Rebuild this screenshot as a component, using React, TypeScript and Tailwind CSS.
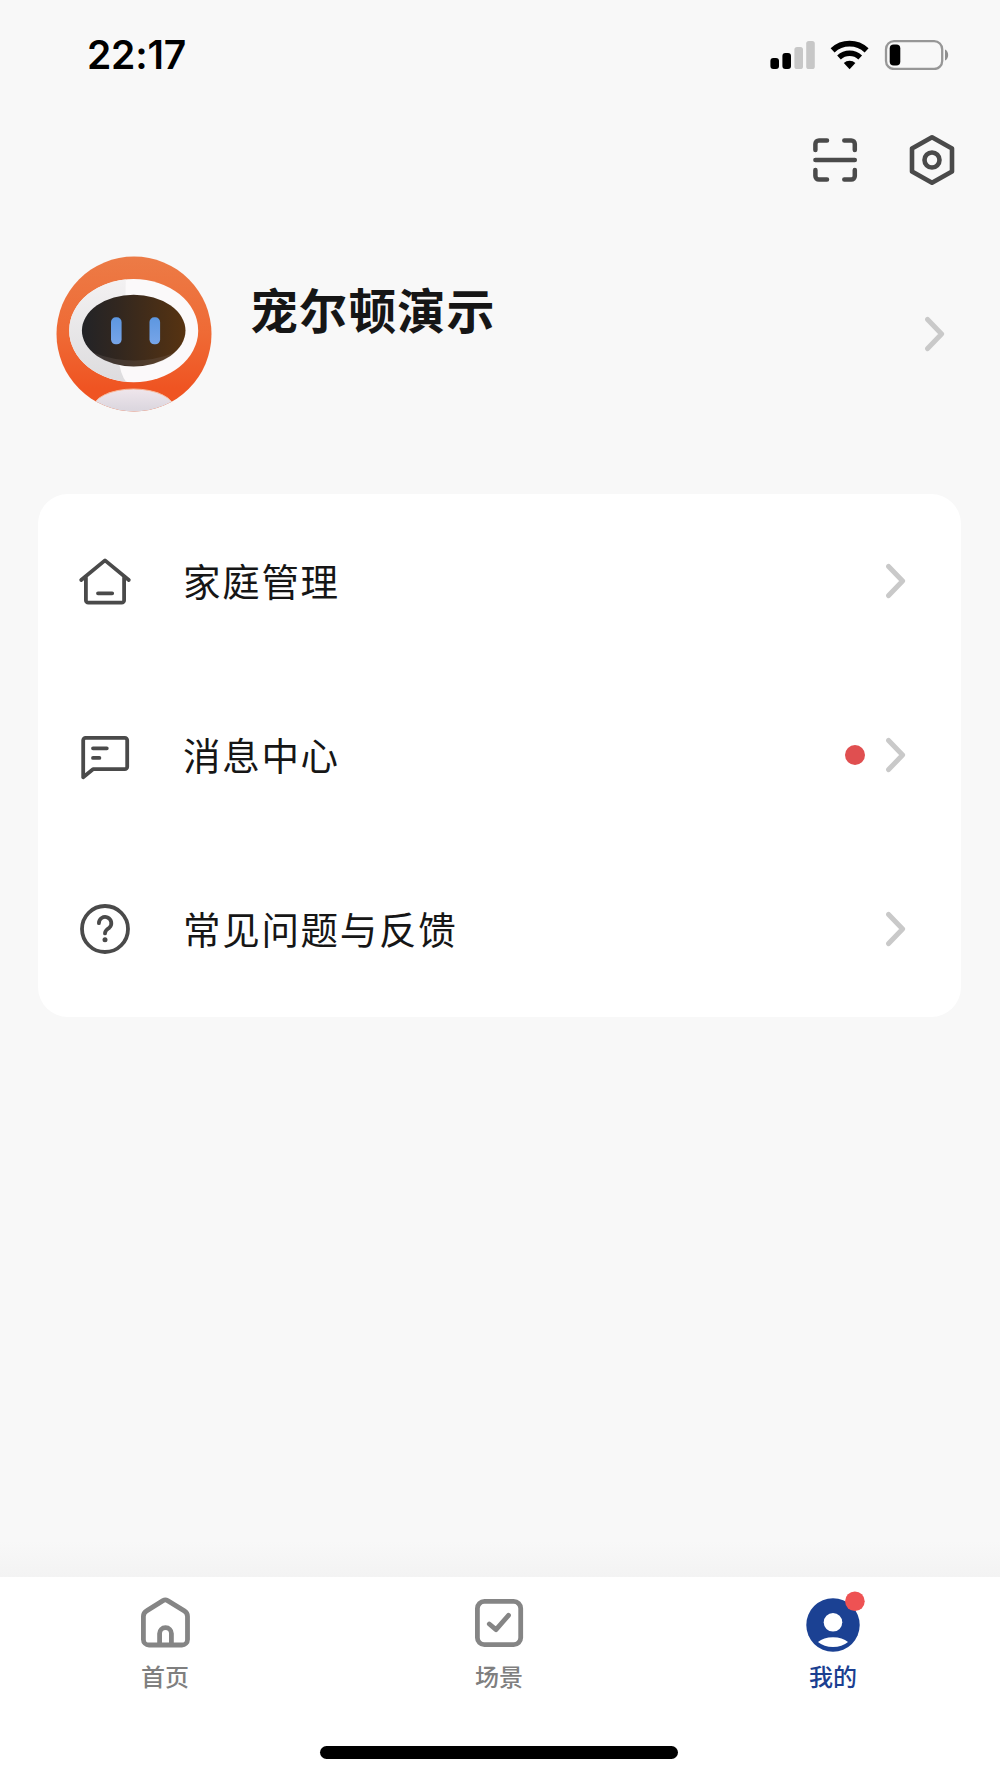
import React from "react";

function Chevron() {
  return (
    <svg width="20" height="36" viewBox="0 0 20 36" fill="none" className="shrink-0">
      <path d="M2.6 3.4 16.6 18 2.6 32.6" stroke="#c9c9c9" strokeWidth="5" strokeLinecap="round" strokeLinejoin="round" />
    </svg>
  );
}

function StatusBar() {
  return (
    <header className="flex h-[110px] items-center justify-between pl-[87px] pr-[50px]">
      <time className="mb-[2px] font-['Inter'] text-[39px] leading-none font-semibold tracking-[-0.2px] text-black">22:17</time>
      <div className="flex items-center">
        <svg width="46" height="30" viewBox="0 0 46 30">
          <rect x="0.4" y="18" width="8.6" height="11" rx="3" fill="#000" />
          <rect x="12.4" y="13" width="8.6" height="16" rx="3" fill="#000" />
          <rect x="24.4" y="7" width="8.6" height="22" rx="2.6" fill="#c7c7c7" />
          <rect x="36.2" y="1" width="8.6" height="28" rx="2.6" fill="#c7c7c7" />
        </svg>
        <svg width="40" height="30" viewBox="0 0 40 30" className="ml-[14px]" fill="none" stroke="#000">
          <path d="M2.6 10.3a25 25 0 0 1 34 0" strokeWidth="5.8" />
          <path d="M9 17.4a15.6 15.6 0 0 1 21.2 0" strokeWidth="5.4" />
          <path d="M19.6 29.2 13.8 23a8.3 8.3 0 0 1 11.6 0z" fill="#000" stroke="none" />
        </svg>
        <svg width="66" height="30" viewBox="0 0 66 30" className="ml-[14px]">
          <rect x="2" y="1.2" width="56.2" height="27.8" rx="8" fill="none" stroke="#979797" strokeWidth="2.3" />
          <rect x="5.7" y="4.6" width="10.6" height="21" rx="4" fill="#000" />
          <path d="M61 9.6c4.2 1.6 4.2 9.4 0 11z" fill="#8e8e8e" />
        </svg>
      </div>
    </header>
  );
}

function ScanIcon() {
  return (
    <svg width="46" height="46" viewBox="0 0 46 46" fill="none" stroke="#4a4a4a" strokeWidth="4.5" strokeLinecap="round">
      <path d="M3.4 13V7A3.6 3.6 0 0 1 7 3.4h8M32.3 3.4h6.9A3.6 3.6 0 0 1 42.8 7v6M3.4 33v6A3.6 3.6 0 0 0 7 42.6h8M32.3 42.6h6.9a3.6 3.6 0 0 0 3.6-3.6v-6M3.4 23h39.4" />
    </svg>
  );
}

function SettingsIcon() {
  return (
    <svg width="46" height="52" viewBox="0 0 46 52" fill="none" stroke="#4a4a4a" strokeWidth="4.6">
      <path d="M23 3.2 43 14.6v22.8L23 48.8 3 37.4V14.6z" strokeLinejoin="round" />
      <circle cx="23" cy="26" r="7.5" />
    </svg>
  );
}

function Avatar() {
  return (
    <svg width="156" height="156" viewBox="0 0 156 156">
      <defs>
        <clipPath id="disc"><circle cx="78" cy="78" r="77.5" /></clipPath>
        <clipPath id="faceLeft"><path d="M0 0H69Q72 40 65 78T74 130H0z" /></clipPath>
        <linearGradient id="orange" x1="0" y1="0" x2="0" y2="1">
          <stop offset="0" stopColor="#ec7b46" />
          <stop offset="0.5" stopColor="#ef6a35" />
          <stop offset="0.85" stopColor="#ef5422" />
        </linearGradient>
        <linearGradient id="visor" x1="0" y1="0" x2="1" y2="0">
          <stop offset="0" stopColor="#222327" />
          <stop offset="0.35" stopColor="#32271f" />
          <stop offset="1" stopColor="#573311" />
        </linearGradient>
        <linearGradient id="shade" x1="0" y1="0" x2="0" y2="1">
          <stop offset="0" stopColor="#f3f1f2" />
          <stop offset="1" stopColor="#dddcde" />
        </linearGradient>
        <linearGradient id="torso" x1="0" y1="0" x2="0" y2="1">
          <stop offset="0" stopColor="#efe6ec" />
          <stop offset="0.5" stopColor="#dcd7df" />
        </linearGradient>
        <linearGradient id="eye" x1="0" y1="0" x2="0" y2="1">
          <stop offset="0" stopColor="#5d97e0" />
          <stop offset="1" stopColor="#77a5e8" />
        </linearGradient>
      </defs>
      <g clipPath="url(#disc)">
        <rect width="156" height="156" fill="url(#orange)" />
        <ellipse cx="77.5" cy="153" rx="41" ry="20" fill="url(#torso)" stroke="#f7b99c" strokeWidth="1" />
        <ellipse cx="77.7" cy="74.6" rx="64.5" ry="51.6" fill="#fbf9fa" />
        <ellipse cx="77.7" cy="74.6" rx="64.5" ry="51.6" fill="url(#shade)" clipPath="url(#faceLeft)" />
        <ellipse cx="77.7" cy="74.6" rx="51.8" ry="35.8" fill="url(#visor)" />
        <path d="M38 97Q78 112 118 97Q105 110 78 110T38 97z" fill="#8a7f78" opacity="0.2" />
        <rect x="55" y="61.3" width="10.6" height="27" rx="4.8" fill="url(#eye)" />
        <rect x="93.5" y="61.3" width="10.6" height="27" rx="4.8" fill="url(#eye)" />
      </g>
    </svg>
  );
}

const iconProps = {
  width: 54,
  height: 54,
  viewBox: "0 0 54 54",
  fill: "none",
  stroke: "#4a4a4a",
  strokeWidth: 3.8,
  strokeLinecap: "round" as const,
  strokeLinejoin: "round" as const,
};

const rows = [
  {
    label: "家庭管理",
    dot: false,
    icon: (
      <svg {...iconProps}>
        <path d="M3.2 26 27 6.4 50.8 26M7.9 22.700V46.200a2.4 2.4 0 0 0 2.4 2.4h33.4a2.4 2.4 0 0 0 2.4-2.4V22.700M20 39.3h14.2" />
      </svg>
    ),
  },
  {
    label: "消息中心",
    dot: true,
    icon: (
      <svg {...iconProps}>
        <path d="M5.2 49.2V12.2a2.4 2.4 0 0 1 2.4-2.4h39.2a2.4 2.4 0 0 1 2.4 2.4v26.6a2.4 2.4 0 0 1-2.4 2.4H15zM15 20.3h13.8M15 29.9h6.4" />
      </svg>
    ),
  },
  {
    label: "常见问题与反馈",
    dot: false,
    icon: (
      <svg {...iconProps}>
        <circle cx="27" cy="27" r="23" />
        <path d="M20.9 21.2a6.2 6.2 0 1 1 10.4 4.5c-2.2 1.9-4.3 2.6-4.3 5.7" />
        <circle cx="27" cy="37.7" r="2.5" fill="#4a4a4a" stroke="none" />
      </svg>
    ),
  },
];

const tabs = [
  {
    label: "首页",
    color: "text-[#7f7f7f]",
    icon: (
      <svg width="60" height="60" viewBox="0 0 60 60" fill="none" stroke="#858585" strokeWidth="4.8" strokeLinejoin="round">
        <path d="M28 11.6a4.6 4.6 0 0 1 4.6 0l16.7 10.3a6.5 6.5 0 0 1 3.2 5.6v22.9a5.6 5.6 0 0 1-5.6 5.6H14a5.6 5.6 0 0 1-5.6-5.6V27.5a6.5 6.5 0 0 1 3.2-5.6zM24.6 56V44.6a5.9 5.9 0 0 1 11.8 0V56" />
      </svg>
    ),
  },
  {
    label: "场景",
    color: "text-[#7f7f7f]",
    icon: (
      <svg width="60" height="60" viewBox="0 0 60 60" fill="none" stroke="#858585" strokeWidth="4.8" strokeLinecap="round" strokeLinejoin="round">
        <rect x="8.4" y="12.4" width="43.3" height="43.3" rx="7" />
        <path d="m20.3 35 6.7 5.6 12.5-14.2" />
      </svg>
    ),
  },
  {
    label: "我的",
    color: "text-[#1b3f91]",
    icon: (
      <svg width="60" height="60" viewBox="0 0 60 60" fill="#fff" className="overflow-visible">
        <circle cx="30" cy="36" r="26.7" fill="#1b4193" />
        <circle cx="30" cy="33.3" r="9.3" />
        <path d="M15 53Q20.5 48.2 30 48.2T45 53Q39 58 30 58T15 53z" />
        <circle cx="51.9" cy="12.2" r="9.8" fill="#ee5253" />
      </svg>
    ),
  },
];

export default function App() {
  return (
    <div className="flex h-[1778px] w-[1000px] flex-col overflow-hidden bg-[#f8f8f8] font-['Noto_Sans_CJK_SC',sans-serif]">
      <StatusBar />
      <div className="flex h-[100px] items-center justify-end gap-[51px] pr-[45px]">
        <ScanIcon />
        <SettingsIcon />
      </div>
      <section className="mt-[46px] flex h-[156px] items-center pr-[55px] pl-[56px]">
        <Avatar />
        <h1 className="mb-[52px] ml-[38px] flex-1 text-[48px] leading-[60px] font-bold tracking-[1.1px] text-[#161616]">宠尔顿演示</h1>
        <Chevron />
      </section>
      <main className="mt-[82px] mr-[39px] ml-[38px] h-[523px] rounded-[30px] bg-white">
        {rows.map((row) => (
          <div key={row.label} className="flex h-[174px] items-center pr-[55px] pl-[40px]">
            {row.icon}
            <span className="mb-[3px] ml-[51px] flex-1 text-[37.5px] leading-[50px] tracking-[1.7px] text-[#161616]">{row.label}</span>
            {row.dot && <i className="mr-[21px] size-[20px] rounded-full bg-[#e04f50]" />}
            <Chevron />
          </div>
        ))}
      </main>
      <div className="mt-auto h-[36px] bg-gradient-to-b from-[#f8f8f8] to-[#f3f3f3]" />
      <nav className="flex h-[201px] flex-col items-center bg-white">
        <div className="flex w-full justify-between pt-[12px] pr-[137px] pl-[135px]">
          {tabs.map((tab) => (
            <div key={tab.label} className="flex w-[60px] flex-col items-center">
              {tab.icon}
              <span className={`mt-[11px] text-[24px] leading-[32px] whitespace-nowrap font-medium ${tab.color}`}>{tab.label}</span>
            </div>
          ))}
        </div>
        <div className="mt-auto mr-[2px] mb-[19px] h-[13px] w-[358px] rounded-full bg-black" />
      </nav>
    </div>
  );
}
